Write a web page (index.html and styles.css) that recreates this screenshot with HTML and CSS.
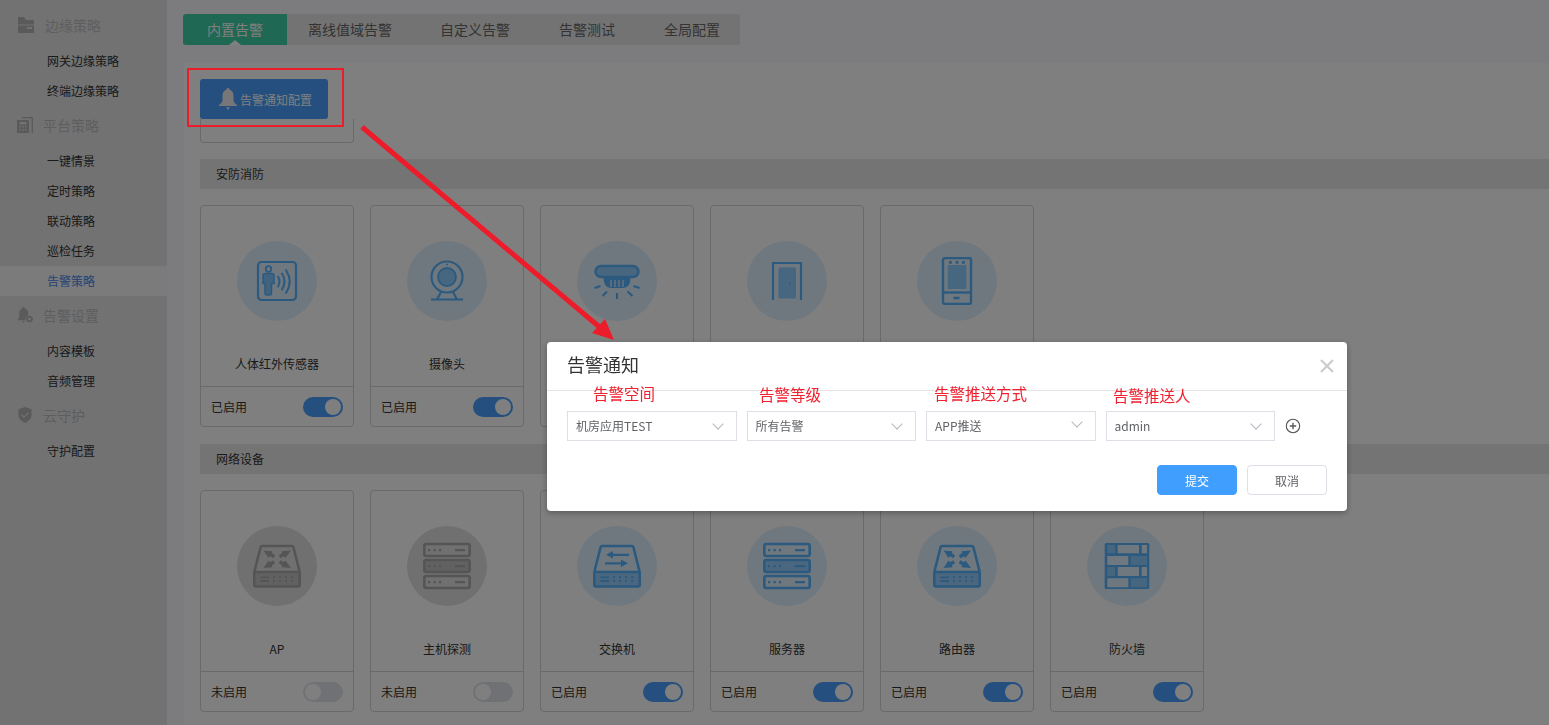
FILE: index.html
```html
<!DOCTYPE html>
<html lang="zh-CN">
<head>
    <meta charset="UTF-8">
    <title>告警策略</title>
    <link rel="stylesheet" href="styles.css">
</head>
<body>
    <!-- shared device icons -->
    <svg class="sprites" xmlns="http://www.w3.org/2000/svg">
        <symbol id="i-body" viewBox="0 0 48 48">
            <rect x="5" y="5" width="38" height="38" rx="3.5" fill="none" stroke="currentColor" stroke-width="2.200"/>
            <circle cx="15.500" cy="12" r="2.800" fill="none" stroke="currentColor" stroke-width="1.800"/>
            <path d="M10 18.500a2 2 0 0 1 2-2h7a2 2 0 0 1 2 2v8h-2.500v10a1.500 1.500 0 0 1-1.500 1.500h-3.500a1.500 1.500 0 0 1-1.500-1.500v-10h-2z" fill="currentColor" fill-opacity=".7" stroke="currentColor" stroke-width="1.500"/>
            <path d="M25 19.500q3 5 0 10M29 16.500q5 8 0 16M33 13q7.500 11.500 0 23" fill="none" stroke="currentColor" stroke-width="2" stroke-linecap="round"/>
        </symbol>
        <symbol id="i-camera" viewBox="0 0 48 48">
            <circle cx="24" cy="20" r="15.500" fill="none" stroke="currentColor" stroke-width="2.200"/>
            <circle cx="24" cy="20" r="9" fill="currentColor" fill-opacity=".6" stroke="currentColor" stroke-width="1.800"/>
            <circle cx="24" cy="7.500" r="1" fill="currentColor"/>
            <path d="M8 42.500h32M18 35l-4 7.500M30 35l4 7.500" fill="none" stroke="currentColor" stroke-width="2.200"/>
        </symbol>
        <symbol id="i-smoke" viewBox="0 0 48 48">
            <rect x="2.500" y="9" width="43" height="11" rx="5.500" fill="currentColor" fill-opacity=".6" stroke="currentColor" stroke-width="2.400"/>
            <path d="M10.500 20.500h27q0 10-7 10.500h-13q-7-.5-7-10.500z" fill="currentColor"/>
            <path d="M18 23v7M22 23v7M26 23v7M30 23v7" stroke="#dff0ff" stroke-width="1.300"/>
            <path d="M1.500 31l6-2M9.500 39l4.500-4.500M24 36v6M34.500 34.500l5 4.500M40.500 29l6 2" fill="none" stroke="currentColor" stroke-width="2.200"/>
        </symbol>
        <symbol id="i-door" viewBox="0 0 48 48">
            <path d="M10 43V6h28v37" fill="none" stroke="currentColor" stroke-width="2.200"/>
            <rect x="15.500" y="10.500" width="17.500" height="31" rx="1.500" fill="currentColor" fill-opacity=".6"/>
            <circle cx="27" cy="26.500" r="1" fill="currentColor"/>
        </symbol>
        <symbol id="i-phone" viewBox="0 0 48 48">
            <rect x="10" y="1" width="28" height="46" rx="2" fill="none" stroke="currentColor" stroke-width="2.400"/>
            <path d="M10 35.500h28" stroke="currentColor" stroke-width="2.400"/>
            <rect x="14.700" y="8" width="18.700" height="24" fill="currentColor" fill-opacity=".6"/>
            <path d="M16 4h2.800v2.800H16zM22.600 4h2.800v2.800h-2.800zM29 4h2.800v2.800H29zM20.500 39.700h6v2.500h-6z" fill="currentColor"/>
        </symbol>
        <symbol id="i-box" viewBox="0 0 48 48">
            <path d="M1.300 30L7.500 5.500a2 2 0 0 1 2-1.500h29a2 2 0 0 1 2 1.500L46.700 30" fill="none" stroke="currentColor" stroke-width="2.600"/>
            <rect x="1.300" y="30" width="45.400" height="14.500" rx="1.500" fill="currentColor" fill-opacity=".55" stroke="currentColor" stroke-width="2.600"/>
            <path d="M7.500 35.300H16M7.500 39H16" stroke="currentColor" stroke-width="1.800"/>
            <path d="M20 34.300h2v2h-2zM26 34.300h2v2h-2zM32 34.300h2v2h-2zM38.200 34.300h2v2h-2zM20 38h2v2h-2zM26 38h2v2h-2zM32 38h2v2h-2zM38.200 38h2v2h-2z" fill="currentColor"/>
        </symbol>
        <symbol id="i-rack" viewBox="0 0 48 48">
            <g fill="none" stroke="currentColor" stroke-width="2.600">
                <rect x="1.300" y="2" width="45.400" height="12" rx="2"/>
                <rect x="1.300" y="18" width="45.400" height="12" rx="2" fill="currentColor" fill-opacity=".55"/>
                <rect x="1.300" y="34" width="45.400" height="12" rx="2"/>
            </g>
            <path d="M5 7h2.200v2.200H5zM10.500 7h2.200v2.200h-2.200zM16 7h2.200v2.200H16zM32 7h10v2.200H32zM5 23h2.200v2.200H5zM10.500 23h2.200v2.200h-2.200zM16 23h2.200v2.200H16zM32 23h10v2.200H32zM5 39h2.200v2.200H5zM10.500 39h2.200v2.200h-2.200zM16 39h2.200v2.200H16zM32 39h10v2.200H32z" fill="currentColor"/>
        </symbol>
        <symbol id="i-router" viewBox="0 0 48 48">
            <use href="#i-box"/>
            <path d="M10.500 8.500l9 .8-.6 2 3.200 2-1.800 3-3.200-2-1.500 1.700zM38 8.500l-9.500.8.600 2-3.400 2 1.800 3 3.400-2 1.500 1.700zM10.500 26l9-.8-.6-2 3.200-2-1.800-3-3.200 2-1.500-1.700zM38 26l-9.500-.8.600-2-3.400-2 1.800-3 3.400 2 1.500-1.700z" fill="currentColor"/>
        </symbol>
        <symbol id="i-switch" viewBox="0 0 48 48">
            <use href="#i-box"/>
            <path d="M36 11.800H20V9l-7 3.800 7 3.800V14h16zM12 20.200h16v-2.800l7 3.800-7 3.800v-2.600H12z" fill="currentColor"/>
        </symbol>
        <symbol id="i-wall" viewBox="0 0 48 48">
            <rect x="1.700" y="1" width="44.600" height="46" rx="1.500" fill="currentColor"/>
            <path d="M14.700 3H36v8.300H14.700zM38.700 3H44v8.300h-5.300zM4.300 14h21v9h-21zM14.700 25H36v9H14.700zM38.700 25H44v9h-5.300zM4.300 36.300h21v9h-21z" fill="#dff0ff"/>
            <path d="M4.300 3H12v8.300H4.300zM27.700 14H44v9H27.700zM4.300 25H12v9H4.300zM27.700 36.300H44v9H27.700z" fill="#dff0ff" fill-opacity=".4"/>
        </symbol>
    </svg>

    <div class="page">
        <aside class="sidebar">
            <div class="side-head first">
                <svg class="side-icon" viewBox="0 0 16 16"><path d="M0 0h6l2 3h8v13H0zM9 10v2h5v-2zM0 7.500h16v1H0z" fill="currentColor" fill-rule="evenodd"/></svg>
                边缘策略
            </div>
            <a class="side-item">网关边缘策略</a>
            <a class="side-item">终端边缘策略</a>
            <div class="side-head">
                <svg class="side-icon" viewBox="0 0 16 16"><path d="M0 3h12v13H0zM2.500 5v2.500h7V5zM2.500 9v1.500H4V9zm2.700 0v1.500h1.600V9zM8 9v1.500h1.500V9zM2.500 12v1.500H4V12zm2.700 0v1.500h1.600V12zM8 12v1.500h1.500V12z" fill="currentColor" fill-rule="evenodd"/><path d="M5 .7h10.300V16" fill="none" stroke="currentColor" stroke-width="1.300"/></svg>
                平台策略
            </div>
            <a class="side-item">一键情景</a>
            <a class="side-item">定时策略</a>
            <a class="side-item">联动策略</a>
            <a class="side-item">巡检任务</a>
            <a class="side-item active">告警策略</a>
            <div class="side-head">
                <svg class="side-icon" viewBox="0 0 16 16"><path d="M6.500 0a1.300 1.300 0 0 1 1.300 1.400C10.300 2 11.300 4 11.300 6.500l.2 1.700a3.800 3.800 0 0 0-2.800 5H.7c0-1 1.300-1.700 1.500-3.700V6.500c0-2.500 1-4.500 3-5.100A1.300 1.300 0 0 1 6.500 0zM5 14h3l-1.500 1.700z" fill="currentColor"/><circle cx="12.500" cy="12" r="2.400" fill="none" stroke="currentColor" stroke-width="1.800"/></svg>
                告警设置
            </div>
            <a class="side-item">内容模板</a>
            <a class="side-item">音频管理</a>
            <div class="side-head">
                <svg class="side-icon" viewBox="0 0 16 16"><path d="M8 0l6.500 2.300v6c0 3.500-3 6-6.500 7.700-3.500-1.700-6.500-4.200-6.500-7.700v-6zM5 7.500l-.8.800 2.800 2.700 4.800-4.700-.8-.8-4 3.900z" fill="currentColor" fill-rule="evenodd"/></svg>
                云守护
            </div>
            <a class="side-item">守护配置</a>
        </aside>

        <main class="main">
            <nav class="tabs">
                <a class="tab active">内置告警</a>
                <a class="tab second">离线值域告警</a>
                <a class="tab">自定义告警</a>
                <a class="tab">告警测试</a>
                <a class="tab last">全局配置</a>
            </nav>

            <section class="panel">
                <button class="notify-btn">
                    <svg class="bell" viewBox="0 0 18 22"><path d="M9 0a1.700 1.700 0 0 1 1.700 1.700C13.500 2.500 14.500 5 14.500 8v4.500c0 1.800 1.700 3 3.500 4.500v1H0v-1c1.800-1.500 3.500-2.700 3.500-4.500V8c0-3 1-5.500 3.800-6.300A1.700 1.700 0 0 1 9 0zM7 19.300h4L9 22z" fill="currentColor"/></svg>
                    告警通知配置
                </button>
                <div class="card-stub"></div>

                <h3 class="group-title">安防消防</h3>
                <div class="card-row">
                    <div class="card">
                        <div class="card-body">
                            <div class="circle on"><svg class="device"><use href="#i-body"/></svg></div>
                            <div class="card-name">人体红外传感器</div>
                        </div>
                        <div class="card-foot">已启用<span class="toggle on"></span></div>
                    </div>
                    <div class="card">
                        <div class="card-body">
                            <div class="circle on"><svg class="device"><use href="#i-camera"/></svg></div>
                            <div class="card-name">摄像头</div>
                        </div>
                        <div class="card-foot">已启用<span class="toggle on"></span></div>
                    </div>
                    <!-- lower part of these three sits behind the dialog -->
                    <div class="card">
                        <div class="card-body">
                            <div class="circle on"><svg class="device"><use href="#i-smoke"/></svg></div>
                        </div>
                    </div>
                    <div class="card">
                        <div class="card-body">
                            <div class="circle on"><svg class="device"><use href="#i-door"/></svg></div>
                        </div>
                    </div>
                    <div class="card">
                        <div class="card-body">
                            <div class="circle on"><svg class="device"><use href="#i-phone"/></svg></div>
                        </div>
                    </div>
                </div>

                <h3 class="group-title">网络设备</h3>
                <div class="card-row">
                    <div class="card">
                        <div class="card-body">
                            <div class="circle off"><svg class="device"><use href="#i-router"/></svg></div>
                            <div class="card-name">AP</div>
                        </div>
                        <div class="card-foot">未启用<span class="toggle"></span></div>
                    </div>
                    <div class="card">
                        <div class="card-body">
                            <div class="circle off"><svg class="device"><use href="#i-rack"/></svg></div>
                            <div class="card-name">主机探测</div>
                        </div>
                        <div class="card-foot">未启用<span class="toggle"></span></div>
                    </div>
                    <div class="card">
                        <div class="card-body">
                            <div class="circle on"><svg class="device"><use href="#i-switch"/></svg></div>
                            <div class="card-name">交换机</div>
                        </div>
                        <div class="card-foot">已启用<span class="toggle on"></span></div>
                    </div>
                    <div class="card">
                        <div class="card-body">
                            <div class="circle on"><svg class="device"><use href="#i-rack"/></svg></div>
                            <div class="card-name">服务器</div>
                        </div>
                        <div class="card-foot">已启用<span class="toggle on"></span></div>
                    </div>
                    <div class="card">
                        <div class="card-body">
                            <div class="circle on"><svg class="device"><use href="#i-router"/></svg></div>
                            <div class="card-name">路由器</div>
                        </div>
                        <div class="card-foot">已启用<span class="toggle on"></span></div>
                    </div>
                    <div class="card">
                        <div class="card-body">
                            <div class="circle on"><svg class="device"><use href="#i-wall"/></svg></div>
                            <div class="card-name">防火墙</div>
                        </div>
                        <div class="card-foot">已启用<span class="toggle on"></span></div>
                    </div>
                </div>
            </section>
        </main>
    </div>

    <div class="mask"></div>

    <div class="dialog">
        <div class="dialog-head">
            告警通知
            <svg class="dialog-close" viewBox="0 0 14 14"><path d="M1 1l12 12M13 1L1 13" stroke="currentColor" stroke-width="2.200" fill="none"/></svg>
        </div>
        <div class="dialog-body">
            <div class="select-row">
                <div class="select">机房应用TEST<i class="chevron"></i></div>
                <div class="select">所有告警<i class="chevron"></i></div>
                <div class="select">APP推送<i class="chevron raised"></i></div>
                <div class="select">admin<i class="chevron"></i></div>
                <svg class="add-icon" viewBox="0 0 16 16"><circle cx="8" cy="8" r="6.700" fill="none" stroke="currentColor" stroke-width="1.100"/><path d="M8 4.800v6.400M4.800 8h6.400" stroke="currentColor" stroke-width="1.300"/></svg>
            </div>
            <div class="dialog-foot">
                <button class="btn primary">提交</button>
                <button class="btn">取消</button>
            </div>
        </div>
        <span class="note note-space">告警空间</span>
        <span class="note note-level">告警等级</span>
        <span class="note note-way">告警推送方式</span>
        <span class="note note-who">告警推送人</span>
    </div>

    <!-- red markup drawn on top of the screenshot -->
    <div class="mark-box"></div>
    <svg class="mark-arrow" viewBox="0 0 1549 725">
        <path d="M362 127L603 330" stroke="#ed1c2b" stroke-width="5" fill="none"/>
        <path d="M614 340L592 333 605 319z" fill="#ed1c2b"/>
    </svg>
</body>
</html>
```

FILE: styles.css
```css
* {
    box-sizing: border-box;
}
html, body {
    height: 100%;
}
body {
    margin: 0;
    overflow: hidden;
    font-family: "Noto Sans CJK SC", "Noto Sans", sans-serif;
    font-size: 12px;
    color: #333;
    background-color: #f8f9fc;
}
.sprites {
    display: none;
}
.page {
    display: flex;
    height: 725px;
}

/* sidebar */
.sidebar {
    width: 167px;
    flex-shrink: 0;
    padding-top: 6px;
    background-color: #e5e5e5;
}
.side-head {
    display: flex;
    align-items: center;
    gap: 10px;
    height: 40px;
    padding: 0 0 2px 17px;
    font-size: 14px;
    color: #bcbcbc;
}
.side-head.first {
    padding-left: 18px;
    gap: 11px;
}
.side-icon {
    width: 16px;
    height: 16px;
    color: #b4b4b4;
}
.side-item {
    display: block;
    height: 30px;
    line-height: 30px;
    padding-left: 47px;
    color: #333;
}
.side-item.active {
    background-color: #f7f7f7;
    color: #4a86e8;
}

/* tabs */
.main {
    flex: 1;
    min-width: 0;
}
.tabs {
    display: flex;
    width: 557px;
    height: 31px;
    margin: 14px 0 18px 16px;
    border-radius: 3px;
    background-color: #e6e6e6;
}
.tab {
    position: relative;
    flex: none;
    height: 31px;
    line-height: 30px;
    padding: 0 24px 0 25px;
    font-size: 14px;
    white-space: nowrap;
    color: #666;
}
.tab.active {
    width: 104px;
    padding: 0 24px;
    border-radius: 3px 0 0 3px;
    background-color: #3fd0a6;
    color: #fff;
}
.tab.active::after {
    content: "";
    position: absolute;
    left: 46px;
    bottom: 0;
    border: 6px solid transparent;
    border-top: 0;
    border-bottom: 5px solid #fff;
}
.tab.second {
    padding: 0 23px 0 21px;
}
.tab.last {
    padding-right: 20px;
}

/* panel */
.panel {
    margin-left: 17px;
    height: 662px;
    padding: 16px 0 0 16px;
    background-color: #fff;
}
.notify-btn {
    display: flex;
    align-items: center;
    width: 128px;
    height: 40px;
    padding: 0 0 0 19px;
    gap: 3px;
    border: 0;
    border-radius: 3px;
    background-color: #489fff;
    font-family: inherit;
    font-size: 12px;
    color: #fff;
}
.bell {
    width: 18px;
    height: 22px;
    color: #eee;
}
.card-stub {
    width: 154px;
    height: 24px;
    border: 1px solid #d4d4d4;
    border-top: 0;
    border-radius: 0 0 4px 4px;
}
.group-title {
    height: 30px;
    line-height: 30px;
    margin: 16px 0;
    padding-left: 16px;
    font-size: 12px;
    font-weight: normal;
    background-color: #e9e9e9;
}
.card-row {
    display: flex;
    gap: 16px;
    margin-bottom: 17px;
}
.card {
    display: flex;
    flex-direction: column;
    width: 154px;
    height: 222px;
    border: 1px solid #d4d4d4;
    border-radius: 4px;
}
.card-body {
    flex: 1;
    display: flex;
    flex-direction: column;
    align-items: center;
    padding-top: 35px;
}
.circle {
    display: flex;
    align-items: center;
    justify-content: center;
    width: 80px;
    height: 80px;
    border-radius: 50%;
}
.circle.on {
    background-color: #dff0ff;
    color: #58b4ff;
}
.circle.off {
    background-color: #e0e0e0;
    color: #aaa;
}
.device {
    width: 48px;
    height: 48px;
}
.card-name {
    height: 20px;
    line-height: 18px;
    margin-top: 34px;
}
.card-foot {
    display: flex;
    align-items: center;
    justify-content: space-between;
    height: 40px;
    padding: 0 10px;
    border-top: 1px solid #d4d4d4;
}
.toggle {
    position: relative;
    width: 40px;
    height: 20px;
    border-radius: 10px;
    background-color: #e0e2ea;
}
.toggle::after {
    content: "";
    position: absolute;
    top: 2px;
    left: 2px;
    width: 16px;
    height: 16px;
    border-radius: 50%;
    background-color: #fff;
}
.toggle.on {
    background-color: #489fff;
}
.toggle.on::after {
    left: 22px;
}

/* dialog */
.mask {
    position: fixed;
    inset: 0;
    z-index: 10;
    background-color: rgba(0, 0, 0, 0.5);
}
.dialog {
    position: fixed;
    left: 547px;
    top: 342px;
    z-index: 11;
    width: 800px;
    height: 169px;
    border-radius: 4px;
    background-color: #fff;
    box-shadow: 0 2px 6px rgba(0, 0, 0, 0.3);
}
.dialog-head {
    position: relative;
    height: 49px;
    line-height: 44px;
    padding-left: 20px;
    font-size: 18px;
    border-bottom: 1px solid #e4e4e4;
}
.dialog-close {
    position: absolute;
    right: 13px;
    top: 17px;
    width: 14px;
    height: 14px;
    color: #ccc;
}
.dialog-body {
    padding: 20px 20px 0;
}
.select-row {
    display: flex;
    align-items: center;
    gap: 10px;
}
.select {
    position: relative;
    width: 169.5px;
    height: 30px;
    line-height: 28px;
    padding-left: 8px;
    border: 1px solid #dcdfe6;
    color: #606266;
}
.chevron {
    position: absolute;
    right: 14px;
    top: 8px;
    width: 8px;
    height: 8px;
    border-right: 1px solid #b5b8bf;
    border-bottom: 1px solid #b5b8bf;
    transform: rotate(45deg);
}
.chevron.raised {
    top: 6px;
}
.add-icon {
    width: 16px;
    height: 16px;
    color: #555;
}
.dialog-foot {
    display: flex;
    justify-content: flex-end;
    gap: 10px;
    margin-top: 24px;
}
.btn {
    width: 80px;
    height: 30px;
    border: 1px solid #dcdfe6;
    border-radius: 4px;
    background-color: #fff;
    font-family: inherit;
    font-size: 12px;
    color: #606266;
}
.btn.primary {
    border-color: #409eff;
    background-color: #409eff;
    color: #fff;
}
.note {
    position: absolute;
    font-size: 15.5px;
    line-height: 20px;
    color: #f0212f;
}
.note-space {
    left: 46px;
    top: 41px;
}
.note-level {
    left: 212px;
    top: 42px;
}
.note-way {
    left: 387px;
    top: 41px;
}
.note-who {
    left: 566px;
    top: 43px;
}

/* markup */
.mark-box {
    position: fixed;
    left: 187px;
    top: 68px;
    z-index: 12;
    width: 157px;
    height: 59px;
    border: 2px solid #ed1c2b;
}
.mark-arrow {
    position: fixed;
    left: 0;
    top: 0;
    z-index: 12;
    width: 1549px;
    height: 725px;
    pointer-events: none;
}
```
